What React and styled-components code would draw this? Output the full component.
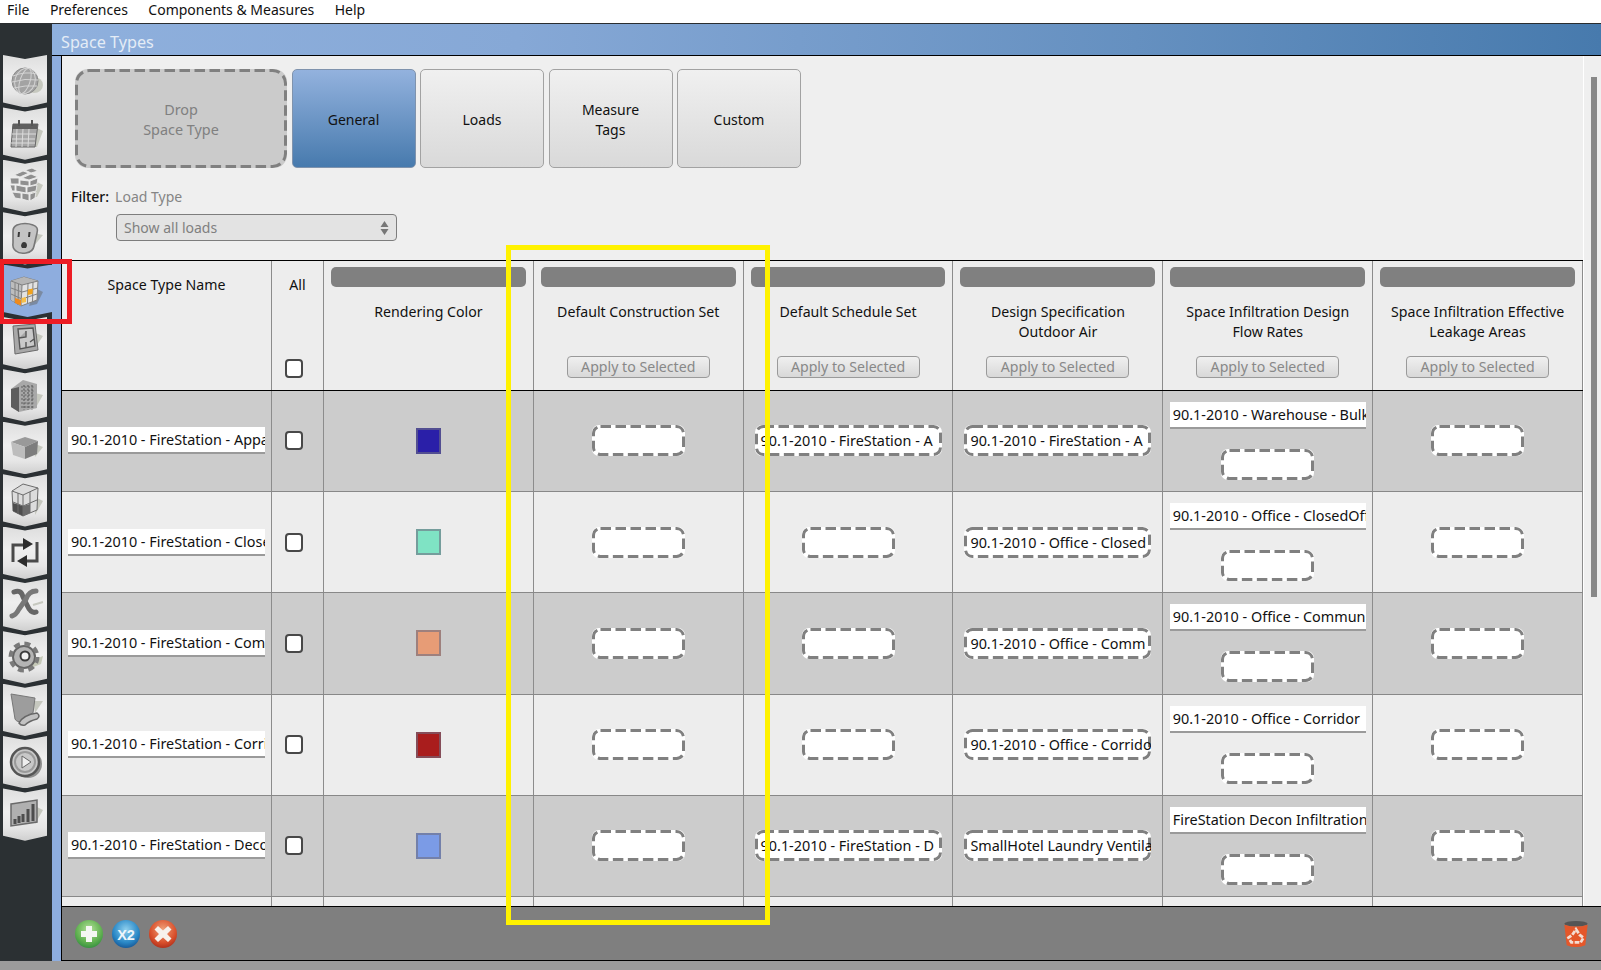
import React from "react";
import styled, { createGlobalStyle } from "styled-components";

const GlobalStyle = createGlobalStyle`
  html, body {
    margin: 0;
    padding: 0;
    background: #9b9b9b;
    overflow: hidden;
  }
  * { box-sizing: border-box; }
  #root {
    font-family: "Noto Sans", "Open Sans", sans-serif;
    font-size: 14.15px;
    color: #111;
  }
`;

// css dashed borders come out too short here, so the frame is a small svg background
const dashFrame = (w, h, r) => {
  const svg = `<svg xmlns='http://www.w3.org/2000/svg' width='${w}' height='${h}'><rect x='1.5' y='1.5' width='${w - 3}' height='${h - 3}' rx='${r}' fill='none' stroke='#808080' stroke-width='3' stroke-dasharray='10.5 4.5'/></svg>`;
  return `url("data:image/svg+xml,${encodeURIComponent(svg)}")`;
};

const Page = styled.div`
  position: relative;
  width: 1601px;
  height: 970px;
  display: flex;
  flex-direction: column;
  overflow: hidden;
`;

const MenuBar = styled.div`
  height: 24px;
  flex: none;
  display: flex;
  gap: 20.5px;
  padding: 0 0 4px 7px;
  align-items: center;
  background: #fff;
  border-bottom: 1px solid #2a2d2f;
  font-size: 14px;
`;

const Body = styled.div`
  flex: none;
  height: 937px;
  display: flex;
`;

const Sidebar = styled.div`
  width: 52px;
  flex: none;
  background: #2b3033;
  padding-top: 31px;
  display: flex;
  flex-direction: column;
`;

const NavButton = styled.div`
  height: 52.4px;
  flex: none;
  width: ${({ $active }) => ($active ? "49px" : "44px")};
  margin-left: 3px;
  display: flex;
  align-items: center;
  justify-content: flex-start;
  padding: 0 0 2px 2px;
  clip-path: polygon(0 0, 50% 4px, 100% 0, 100% calc(100% - 5px), 50% 100%, 0 calc(100% - 5px));
  background: ${({ $active }) =>
    $active ? "#8eadde" : "linear-gradient(#dedede, #efefef 45%, #e6e6e6 75%, #cfcfcf)"};

  svg {
    width: 40px;
    height: 40px;
    filter: blur(0.6px);
  }
`;

const Main = styled.div`
  flex: 1;
  display: flex;
  flex-direction: column;
  background: #8eadde;
  min-width: 0;
`;

const TitleBar = styled.div`
  height: 32px;
  flex: none;
  padding: 6px 0 0 9px;
  background: linear-gradient(90deg, #8fb0dd, #86a8d6 30%, #6590c0 70%, #477aad);
  border-bottom: 1px solid #000;
  color: #e4ecf6;
  font-size: 16.2px;
  line-height: 24px;
`;

const Content = styled.div`
  flex: 1;
  margin-left: 9px;
  border-left: 1px solid #000;
  display: flex;
  flex-direction: column;
  min-height: 0;
  background: #efefef;
`;

const Scroller = styled.div`
  flex: 1;
  min-height: 0;
  display: flex;
`;

const ScrollArea = styled.div`
  width: 1521px;
  flex: none;
  display: flex;
  flex-direction: column;
  min-height: 0;
`;

const ScrollTrack = styled.div`
  flex: 1;
  border-left: 1px solid #fff;
  padding: 21px 0 0 7px;
`;

const ScrollThumb = styled.div`
  width: 6px;
  height: 520px;
  background: #888;
`;

const TopArea = styled.div`
  height: 204px;
  flex: none;
  padding: 13px 0 0 13px;
`;

const TabRow = styled.div`
  display: flex;
  gap: 4.5px;
  height: 99px;
`;

const DropZone = styled.div`
  width: 212px;
  display: flex;
  align-items: center;
  justify-content: center;
  padding-top: 2px;
  text-align: center;
  line-height: 20px;
  color: #808080;
  background: ${dashFrame(212, 99, 13)}, #cbcbcb;
  border-radius: 13px;
  font-size: 14.4px;
`;

const Tab = styled.div`
  width: 124px;
  display: flex;
  align-items: center;
  justify-content: center;
  padding-top: 2px;
  text-align: center;
  line-height: 20px;
  font-size: 14px;
  border-radius: 5px;
  border: 1px solid ${({ $active }) => ($active ? "#7f93ad" : "#a2a2a2")};
  background: ${({ $active }) =>
    $active ? "linear-gradient(#93b2de, #477aad)" : "linear-gradient(#f0f0f0, #d9d9d9)"};
`;

const FilterRow = styled.div`
  margin: 19px 0 0 -4px;
  display: flex;
  gap: 6px;
  line-height: 20px;
  font-size: 14px;
`;

const FilterLabel = styled.span`
  font-weight: 500;
`;

const FilterHint = styled.span`
  color: #858585;
`;

const Select = styled.div`
  width: 281px;
  height: 27px;
  margin: 7px 0 0 41px;
  padding: 0 7px;
  display: flex;
  align-items: center;
  justify-content: space-between;
  background: #e3e3e3;
  border: 1px solid #7d7d7d;
  border-radius: 4px;
  color: #808080;
  font-size: 14px;
`;

const SelectArrows = styled.svg`
  width: 9px;
  height: 16px;
`;

const Table = styled.div`
  flex: 1;
  min-height: 0;
  overflow: hidden;
`;

const GridRow = styled.div`
  display: grid;
  grid-template-columns: 210px 52px repeat(6, 1fr);
  height: 101.25px;
  background: ${({ $dark }) => ($dark ? "#cccccc" : "#ededed")};
  border-bottom: 1px solid #888;
`;

const HeaderRow = styled(GridRow)`
  height: 130.75px;
  background: #ededed;
  border-top: 1px solid #000;
  border-bottom: 1px solid #000;
`;

const Cell = styled.div`
  border-right: 1px solid #8c8c8c;
  display: flex;
  flex-direction: column;
  align-items: center;
  justify-content: center;
  min-width: 0;
`;

const HeaderCell = styled(Cell)`
  justify-content: flex-start;
  padding: 14px 7px 12px;
  text-align: center;
  line-height: 20px;
`;

const ColumnHeader = styled(HeaderCell)`
  padding-top: 6px;
  padding-bottom: 12px;
`;

const GrayBar = styled.div`
  width: 100%;
  height: 20px;
  flex: none;
  background: #808080;
  border-radius: 5px;
  margin-bottom: 15px;
`;

const ApplyButton = styled.div`
  width: 143px;
  height: 22px;
  flex: none;
  margin-top: auto;
  display: flex;
  align-items: center;
  justify-content: center;
  color: #888;
  background: linear-gradient(#f0f0f0, #d8d8d8);
  border: 1px solid #9a9a9a;
  border-radius: 4px;
`;

const CheckBox = styled.div`
  width: 18px;
  height: 19px;
  flex: none;
  background: #fff;
  border: 2px solid #484848;
  border-radius: 4px;
  margin-right: 7px;
  margin-top: ${({ $bottom }) => ($bottom ? "auto" : "0")};
`;

const Swatch = styled.div`
  width: 25px;
  height: 26px;
  border: 2px solid rgba(110, 110, 130, 0.6);
  background: ${({ $color }) => $color};
`;

const NameField = styled.div`
  width: 197px;
  height: 27px;
  padding: 0 2px 0 3px;
  line-height: 26px;
  background: #fff;
  border-bottom: 2px solid #9a9a9a;
  white-space: nowrap;
  overflow: hidden;
  font-size: 14.4px;
`;

const SlotField = styled(NameField)`
  width: 196px;
  flex: none;
  margin-bottom: 20px;
`;

const DropSlot = styled.div`
  width: 93px;
  height: 31px;
  flex: none;
  background: ${dashFrame(93, 31, 7)}, #fff;
  border-radius: 7px;
`;

const FilledSlot = styled.div`
  width: 187px;
  height: 31px;
  flex: none;
  padding: 0 3px 0 6px;
  background: ${dashFrame(187, 31, 7)}, #fff;
  border-radius: 7px;
  line-height: 31px;
  white-space: nowrap;
  overflow: hidden;
  font-size: 14.4px;
`;

const Footer = styled.div`
  height: 55px;
  flex: none;
  display: flex;
  align-items: center;
  gap: 9px;
  padding: 0 11px 0 13px;
  background: #7f7f7f;
  border-top: 1px solid #000;
  border-bottom: 1px solid #000;

  svg {
    width: 28px;
    height: 28px;
  }
`;

const TrashIcon = styled.svg`
  margin-left: auto;
`;

const BottomStrip = styled.div`
  flex: 1;
  background: #9b9b9b;
`;

// the two annotation boxes drawn on top of the screenshot
const RedMark = styled.div`
  position: absolute;
  left: 0;
  top: 259px;
  width: 72px;
  height: 65px;
  border: 5px solid #ed1c24;
  border-left-width: 4px;
`;

const YellowMark = styled.div`
  position: absolute;
  left: 506px;
  top: 245px;
  width: 264px;
  height: 680px;
  border: 5px solid #fff200;
`;

const shadow = "#c6c8bf";

const GlobeIcon = () => (
  <svg viewBox="0 0 40 40">
    <ellipse cx="29" cy="25" rx="9" ry="8" fill={shadow} />
    <circle cx="20" cy="21" r="13" fill="#a3a3a3" stroke="#8a8a8a" />
    <g fill="none" stroke="#d4d4d4" strokeWidth="1">
      <ellipse cx="20" cy="21" rx="5" ry="13" transform="rotate(18 20 21)" />
      <ellipse cx="20" cy="21" rx="10" ry="13" transform="rotate(18 20 21)" />
      <path d="M8 16 Q20 11 32 14 M7 22 Q20 18 33 20 M9 28 Q20 25 32 26" />
    </g>
  </svg>
);

const CalendarIcon = () => (
  <svg viewBox="0 0 40 40">
    <path d="M30 14 L38 18 L32 34 L24 34Z" fill={shadow} />
    <path d="M8 11 H33 L30 34 H6Z" fill="#a6a6a6" stroke="#666" />
    <path d="M8 11 H33 L32 16 H7Z" fill="#5f5f5f" />
    <path d="M14 7 V13 M27 7 V13" stroke="#555" strokeWidth="2" />
    <path d="M7 21 H31 M7 26 H30 M6 30 H30 M12 16 L11 34 M18 16 L17 34 M24 16 L23 34" stroke="#dcdcdc" strokeWidth="1" />
  </svg>
);

const BricksIcon = () => (
  <svg viewBox="0 0 40 40">
    <path d="M30 16 L38 20 L32 32 L26 32Z" fill={shadow} />
    <g fill="#8f8f8f" stroke="#ececec" strokeWidth="0.9">
      <path d="M9 10 L18 6 L24 8 L15 12Z" />
      <path d="M20 5 L27 3 L33 6 L26 8Z" />
      <path d="M17 13 L26 9 L33 12 L24 15Z" />
      <path d="M5 13 L14 13 L14 19 L6 19Z" />
      <path d="M15 15 L24 16 L24 21 L15 20Z" />
      <path d="M25 16 L33 13 L32 19 L25 21Z" />
      <path d="M5 20 L10 20 L10 26 L7 26Z" />
      <path d="M11 20 L21 22 L21 28 L11 26Z" />
      <path d="M22 22 L32 20 L31 26 L22 28Z" />
      <path d="M7 27 L16 28 L16 34 L10 33Z" />
      <path d="M17 28 L24 29 L24 36 L17 34Z" />
      <path d="M25 29 L31 27 L30 33 L25 36Z" />
    </g>
  </svg>
);

const OutletIcon = () => (
  <svg viewBox="0 0 40 40">
    <path d="M28 16 L38 18 L28 30Z" fill={shadow} />
    <path d="M12 8 Q20 5 28 8 Q34 10 32 16 L29 29 Q28 35 21 36 Q14 37 11 34 Q7 31 8 26 L8 14 Q8 10 12 8Z" fill="#c4c4c4" stroke="#777" strokeWidth="1.6" />
    <path d="M14 15 L13.5 20 M24.500 15 L24 20" stroke="#3a3a3a" strokeWidth="2" />
    <path d="M16 29 Q16.500 25 19 25 Q22 25 22 29 L21 31 H17Z" fill="#3a3a3a" />
  </svg>
);

const SpaceCubeIcon = () => (
  <svg viewBox="0 0 40 40">
    <path d="M30 18 L38 22 L32 34 L24 36Z" fill="#7a8aa2" />
    <path d="M6 11 L19 7 L33 11 L32 30 L16 36 L6 30Z" fill="#e2e2e2" stroke="#808080" />
    <path d="M6 11 L19 7 L33 11 L17 15Z" fill="#b5b5b5" />
    <path d="M6 11 L17 15 L16 36 L6 30Z" fill="#bdbdbd" />
    <path d="M6 11 L17 15 L33 11 M17 15 L16 36 M10 13 L10 33 M13.500 14 L13 35 M23 13 L22.500 33 M28 12 L27.500 32 M6 18 L17 22 L33 18 M6 24 L17 29 L32 24" fill="none" stroke="#808080" />
    <path d="M23 19.500 L28 18.500 L27.500 24 L22.500 25Z" fill="#f2a31c" />
    <path d="M10 28 L16 30 L16 35.500 L10 33Z" fill="#f08a1c" />
    <path d="M16.500 28 L21 27 L21 32 L16.500 33Z" fill="#f7c04a" />
  </svg>
);

const PlanIcon = () => (
  <svg viewBox="0 0 40 40">
    <path d="M28 10 L38 14 L30 26Z" fill={shadow} />
    <path d="M8 4 L30 2 L33 28 L10 32Z" fill="#a8a8a8" stroke="#6a6a6a" />
    <path d="M13 7 L28 6 L30 24 L15 27Z M14 16 L21 15 L21 9 M21 20 L21 26 M25 20 L29 17" fill="#c9c9c9" stroke="#555" strokeWidth="1.4" />
  </svg>
);

const BuildingIcon = () => (
  <svg viewBox="0 0 40 40">
    <path d="M30 18 L38 20 L30 34Z" fill={shadow} />
    <path d="M6 14 L18 5 L32 9 L32 33 L14 37 L6 32Z" fill="#a8a8a8" />
    <path d="M6 14 L14 12 L14 37 L6 32Z" fill="#5d5d5d" />
    <path d="M16 12 H30 M16 16 H30 M16 20 H30 M16 24 H30 M16 28 H30 M16 32 H30 M19 10 V35 M23 10 V35 M27 10 V35" stroke="#5f5f5f" strokeWidth="1.2" strokeDasharray="2 1.5" />
  </svg>
);

const BoxIcon = () => (
  <svg viewBox="0 0 40 40">
    <path d="M28 16 L38 20 L30 30Z" fill={shadow} />
    <path d="M6 15 L20 10 L33 14 L20 20Z" fill="#999" />
    <path d="M6 15 L20 20 L20 32 L8 28Z" fill="#bdbdbd" />
    <path d="M20 20 L33 14 L32 27 L20 32Z" fill="#7d7d7d" />
  </svg>
);

const GridCubeIcon = () => (
  <svg viewBox="0 0 40 40">
    <path d="M30 18 L38 22 L30 36Z" fill={shadow} />
    <path d="M7 12 L18 5 L33 9 L32 31 L18 37 L8 32Z" fill="#dcdcdc" stroke="#6b6b6b" />
    <path d="M8 24 L18 27 L18 37 L8 32Z" fill="#4e4e4e" />
    <path d="M18 27 L25 25 L25 34 L18 37Z" fill="#6a6a6a" />
    <path d="M7 12 L18 16 L33 9 M18 16 V37 M13 14 V35 M25 13 V34 M8 23 L18 27 L32 21" fill="none" stroke="#6b6b6b" />
  </svg>
);

const LoopIcon = () => (
  <svg viewBox="0 0 40 40">
    <path d="M8 30 V13 H21 M32 10 V29 H19" fill="none" stroke="#4a4a4a" strokeWidth="3" />
    <path d="M18 6 L28 12 L18 18Z M22 23 L12 29 L22 35Z" fill="#2c2c2c" />
  </svg>
);

const ToolsIcon = () => (
  <svg viewBox="0 0 40 40">
    <path d="M28 21 L38 18" stroke={shadow} strokeWidth="2" />
    <path d="M9 8 Q16 5 18 13 L22 21 Q26 30 31 28" fill="none" stroke="#666" strokeWidth="5" strokeLinecap="round" />
    <path d="M31 7 Q24 7 21 15 L14 25 Q11 31 7 32" fill="none" stroke="#787878" strokeWidth="5" strokeLinecap="round" />
  </svg>
);

const GearIcon = () => (
  <svg viewBox="0 0 40 40">
    <path d="M24 26 L38 20 L36 28 L26 32Z" fill="#c5c9b8" />
    <circle cx="19" cy="21" r="11" fill="#b4b4b4" stroke="#666" strokeWidth="2" />
    <circle cx="19" cy="21" r="13.500" fill="none" stroke="#7a7a7a" strokeWidth="4" strokeDasharray="6 4.600" />
    <circle cx="20" cy="20" r="4.500" fill="#f2f2f2" stroke="#3c3c3c" strokeWidth="2" />
  </svg>
);

const ScrollIcon = () => (
  <svg viewBox="0 0 40 40">
    <path d="M28 12 L38 12 L30 24Z" fill={shadow} />
    <path d="M6 5 L30 9 L28 24 Q20 26 18 32 Q12 34 10 30Z" fill="#9d9d9d" stroke="#777" />
    <path d="M14 34 Q18 26 32 24 Q36 27 32 30 Q24 32 20 36 Q16 37 14 34Z" fill="#c2c2c2" stroke="#666" strokeWidth="1.5" />
  </svg>
);

const PlayIcon = () => (
  <svg viewBox="0 0 40 40">
    <circle cx="23" cy="23" r="14" fill="#8f8f8f" />
    <circle cx="20" cy="21" r="14" fill="#c8c8c8" stroke="#555" strokeWidth="2.500" />
    <circle cx="20" cy="21" r="10" fill="none" stroke="#9a9a9a" strokeWidth="2" />
    <path d="M17 15 L26 21 L17 27Z" fill="#eee" stroke="#666" />
  </svg>
);

const ChartIcon = () => (
  <svg viewBox="0 0 40 40">
    <path d="M30 12 L38 16 L30 30Z" fill={shadow} />
    <path d="M6 10 L32 6 L32 28 L6 32Z" fill="#b0b0b0" stroke="#6a6a6a" strokeWidth="1.500" />
    <path d="M10 30 V25 M14 29 V22 M18 28 V20 M23 28 V15 M28 27 V10" stroke="#4d4d4d" strokeWidth="3" />
  </svg>
);

const navIcons = [
  GlobeIcon,
  CalendarIcon,
  BricksIcon,
  OutletIcon,
  SpaceCubeIcon,
  PlanIcon,
  BuildingIcon,
  BoxIcon,
  GridCubeIcon,
  LoopIcon,
  ToolsIcon,
  GearIcon,
  ScrollIcon,
  PlayIcon,
  ChartIcon,
];

const columns = [
  ["Rendering Color"],
  ["Default Construction Set"],
  ["Default Schedule Set"],
  ["Design Specification", "Outdoor Air"],
  ["Space Infiltration Design", "Flow Rates"],
  ["Space Infiltration Effective", "Leakage Areas"],
];

const rows = [
  {
    name: "90.1-2010 - FireStation - Apparatus",
    color: "#2a1fa8",
    schedule: "90.1-2010 - FireStation - A",
    design: "90.1-2010 - FireStation - A",
    flow: "90.1-2010 - Warehouse - Bulk",
  },
  {
    name: "90.1-2010 - FireStation - Closed",
    color: "#7fe3c4",
    design: "90.1-2010 - Office - Closed",
    flow: "90.1-2010 - Office - ClosedOffice",
  },
  {
    name: "90.1-2010 - FireStation - Community",
    color: "#e79c76",
    design: "90.1-2010 - Office - Comm",
    flow: "90.1-2010 - Office - Community",
  },
  {
    name: "90.1-2010 - FireStation - Corridor",
    color: "#a91d1d",
    design: "90.1-2010 - Office - Corridor",
    flow: "90.1-2010 - Office - Corridor",
  },
  {
    name: "90.1-2010 - FireStation - Decon",
    color: "#7b9be6",
    schedule: "90.1-2010 - FireStation - D",
    design: "SmallHotel Laundry Ventilation",
    flow: "FireStation Decon Infiltration",
  },
];

const RoundButton = ({ id, light, mid, dark, children }) => (
  <svg viewBox="0 0 28 28">
    <defs>
      <radialGradient id={id} cx="50%" cy="35%" r="70%">
        <stop offset="0%" stopColor={light} />
        <stop offset="65%" stopColor={mid} />
        <stop offset="100%" stopColor={dark} />
      </radialGradient>
    </defs>
    <circle cx="14" cy="14" r="14" fill={`url(#${id})`} />
    {children}
  </svg>
);

const SpaceTypeRow = ({ row, dark }) => (
  <GridRow $dark={dark}>
    <Cell>
      <NameField>{row.name}</NameField>
    </Cell>
    <Cell>
      <CheckBox />
    </Cell>
    <Cell>
      <Swatch $color={row.color} />
    </Cell>
    <Cell>
      <DropSlot />
    </Cell>
    <Cell>{row.schedule ? <FilledSlot>{row.schedule}</FilledSlot> : <DropSlot />}</Cell>
    <Cell>
      <FilledSlot>{row.design}</FilledSlot>
    </Cell>
    <Cell>
      <SlotField>{row.flow}</SlotField>
      <DropSlot />
    </Cell>
    <Cell>
      <DropSlot />
    </Cell>
  </GridRow>
);

export default function App() {
  return (
    <Page>
      <GlobalStyle />
      <MenuBar>
        <span>File</span>
        <span>Preferences</span>
        <span>Components &amp; Measures</span>
        <span>Help</span>
      </MenuBar>
      <Body>
        <Sidebar>
          {navIcons.map((Icon, i) => (
            <NavButton key={i} $active={i === 4}>
              <Icon />
            </NavButton>
          ))}
        </Sidebar>
        <Main>
          <TitleBar>Space Types</TitleBar>
          <Content>
            <Scroller>
              <ScrollArea>
                <TopArea>
                  <TabRow>
                    <DropZone>
                      Drop
                      <br />
                      Space Type
                    </DropZone>
                    <Tab $active>General</Tab>
                    <Tab>Loads</Tab>
                    <Tab>
                      Measure
                      <br />
                      Tags
                    </Tab>
                    <Tab>Custom</Tab>
                  </TabRow>
                  <FilterRow>
                    <FilterLabel>Filter:</FilterLabel>
                    <FilterHint>Load Type</FilterHint>
                  </FilterRow>
                  <Select>
                    Show all loads
                    <SelectArrows viewBox="0 0 9 16">
                      <path d="M4.5 1 L8.5 7 H0.5Z M0.5 9 H8.5 L4.5 15Z" fill="#777" />
                    </SelectArrows>
                  </Select>
                </TopArea>
                <Table>
                  <HeaderRow>
                    <HeaderCell>Space Type Name</HeaderCell>
                    <HeaderCell>
                      All
                      <CheckBox $bottom />
                    </HeaderCell>
                    {columns.map((lines, i) => (
                      <ColumnHeader key={i}>
                        <GrayBar />
                        {lines.map((line) => (
                          <div key={line}>{line}</div>
                        ))}
                        {i > 0 && <ApplyButton>Apply to Selected</ApplyButton>}
                      </ColumnHeader>
                    ))}
                  </HeaderRow>
                  {rows.map((row, i) => (
                    <SpaceTypeRow key={row.name} row={row} dark={i % 2 === 0} />
                  ))}
                  <GridRow>
                    {Array.from({ length: 8 }, (_, i) => (
                      <Cell key={i} />
                    ))}
                  </GridRow>
                </Table>
              </ScrollArea>
              <ScrollTrack>
                <ScrollThumb />
              </ScrollTrack>
            </Scroller>
            <Footer>
              <RoundButton id="addGrad" light="#b5e29b" mid="#5fb04f" dark="#2f8a3e">
                <path d="M11 6 H17 V11 H22 V17 H17 V22 H11 V17 H6 V11 H11Z" fill="#f4f7f2" />
              </RoundButton>
              <RoundButton id="copyGrad" light="#8fd0ee" mid="#2a88c6" dark="#14508f">
                <text x="14" y="19.500" textAnchor="middle" fontSize="14.500" fontWeight="800" fill="#eef6fb" fontFamily="Liberation Sans, sans-serif">X2</text>
              </RoundButton>
              <RoundButton id="delGrad" light="#f0a27a" mid="#d9502c" dark="#a82a18">
                <path d="M9 6 L14 10.500 L19 6 L22.500 9.500 L18 14 L22.500 18.500 L19 22 L14 17.500 L9 22 L5.500 18.500 L10 14 L5.500 9.500Z" fill="#f7f1ec" />
              </RoundButton>
              <TrashIcon viewBox="0 0 28 30">
                <ellipse cx="14" cy="4" rx="12.500" ry="3" fill="#555" />
                <path d="M1.500 5 Q14 9 26.500 5 L24 27 Q14 31 4 27Z" fill="#e4572a" />
                <path d="M14 10 L18 16 L22 19 L19 24 H9 L6 19 L10 16Z" fill="none" stroke="#f3dcd2" strokeWidth="3" strokeDasharray="5 1.500" />
              </TrashIcon>
            </Footer>
          </Content>
        </Main>
      </Body>
      <BottomStrip />
      <RedMark />
      <YellowMark />
    </Page>
  );
}
